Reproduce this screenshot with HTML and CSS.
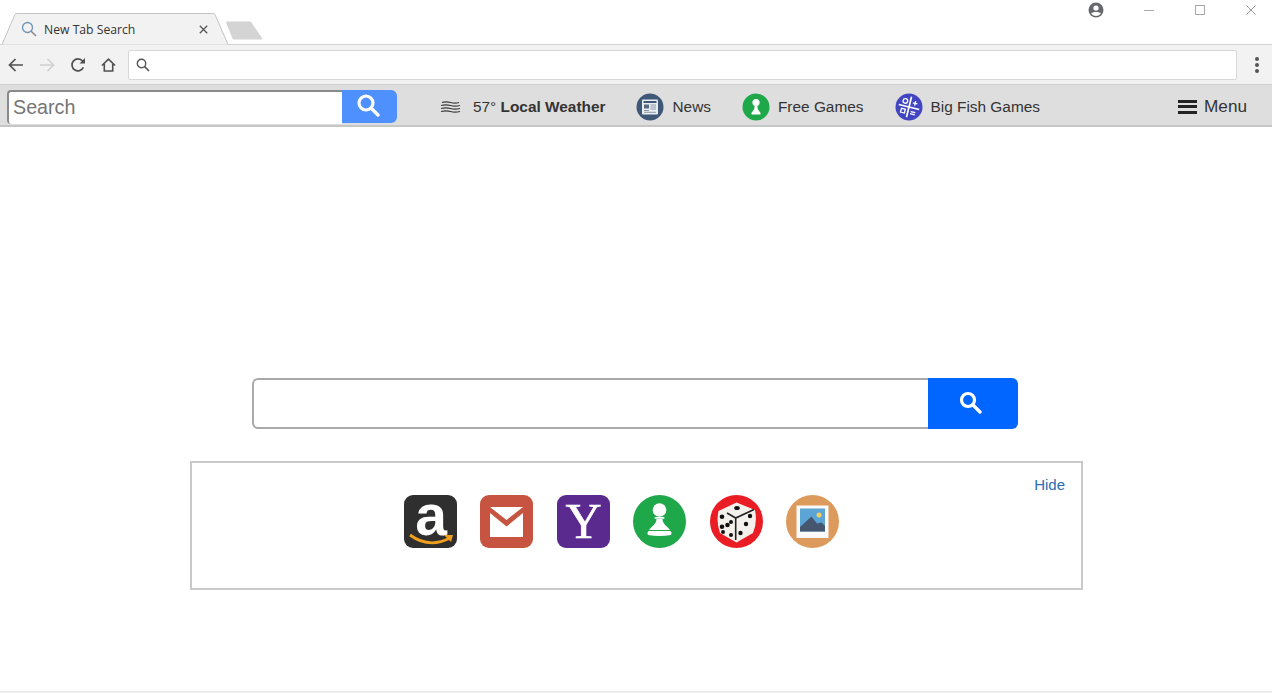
FILE: index.html
```html
<!DOCTYPE html>
<html lang="en">
<head>
    <meta charset="UTF-8">
    <meta name="viewport" content="width=device-width, initial-scale=1.0">
    <title>New Tab Search</title>
    <link rel="stylesheet" href="styles.css">
</head>
<body>

    <!-- browser chrome -->
    <div class="tabstrip">
        <div class="tab">
            <svg class="tab-shape" width="230" height="32" viewBox="0 0 230 32">
                <path d="M0 31.5 L13 1.5 Q13.6 .5 15 .5 L211 .5 Q212.4 .5 213 1.5 L226 31.5" fill="#f2f2f2" stroke="#c4c4c4"/>
            </svg>
            <svg class="tab-icon" width="16" height="16" viewBox="0 0 16 16">
                <circle cx="6.5" cy="6.5" r="5" fill="none" stroke="#6f93b5" stroke-width="1.3"/>
                <path d="M10.2 10.2 L15 15" stroke="#8a8a8a" stroke-width="1.6"/>
            </svg>
            <span class="tab-title">New Tab Search</span>
            <svg class="tab-close" width="9" height="9" viewBox="0 0 9 9">
                <path d="M.8 .8 L8.2 8.2 M8.2 .8 L.8 8.2" stroke="#555" stroke-width="1.3"/>
            </svg>
        </div>
        <svg class="newtab" width="38" height="19" viewBox="0 0 38 19">
            <path d="M1 1.5 Q1 .5 2 .5 L25 .5 Q26 .5 26.5 1.5 L37 17 Q37.5 18.5 36 18.5 L9 18.5 Q8 18.5 7.5 17.5 Z" fill="#d4d4d4"/>
        </svg>
        <div class="window-btns">
            <svg class="win-user" width="16" height="16" viewBox="0 0 16 16">
                <circle cx="8" cy="8" r="7.5" fill="#666a6e"/>
                <circle cx="8" cy="6" r="2.6" fill="#fff"/>
                <path d="M3.2 11.6 C4.4 9.6 11.6 9.6 12.8 11.6 C11.4 13.4 9.6 14 8 14 C6.4 14 4.6 13.4 3.2 11.6 Z" fill="#fff"/>
            </svg>
            <svg class="win-btn" width="10" height="10" viewBox="0 0 10 10"><path d="M0 5.5 H10" stroke="#aaa"/></svg>
            <svg class="win-btn" width="10" height="10" viewBox="0 0 10 10"><rect x=".5" y=".5" width="9" height="9" fill="none" stroke="#aaa"/></svg>
            <svg class="win-btn" width="10" height="10" viewBox="0 0 10 10"><path d="M.5 .5 L9.5 9.5 M9.5 .5 L.5 9.5" stroke="#999"/></svg>
        </div>
    </div>

    <div class="toolbar">
        <div class="tool">
            <svg width="16" height="14" viewBox="0 0 16 14"><path d="M15 7 H2 M7.5 1 L1.5 7 L7.5 13" fill="none" stroke="#505050" stroke-width="1.7"/></svg>
        </div>
        <div class="tool">
            <svg width="16" height="14" viewBox="0 0 16 14"><path d="M1 7 H14 M8.5 1 L14.5 7 L8.5 13" fill="none" stroke="#d0d0d0" stroke-width="1.7"/></svg>
        </div>
        <div class="tool">
            <svg width="16" height="16" viewBox="0 0 16 16"><path d="M13.4 10.4 A6 6 0 1 1 12.6 4" fill="none" stroke="#505050" stroke-width="1.7"/><path d="M15 1 V6.5 H9.5 Z" fill="#505050"/></svg>
        </div>
        <div class="tool">
            <svg width="15" height="14" viewBox="0 0 16 15"><path d="M1 8 L8 1.2 L15 8 M3.5 6.5 V14 H12.5 V6.5" fill="none" stroke="#505050" stroke-width="1.7"/></svg>
        </div>
        <div class="omnibox">
            <svg width="14" height="14" viewBox="0 0 14 14">
                <circle cx="5.5" cy="5.5" r="4.2" fill="none" stroke="#555" stroke-width="1.4"/>
                <path d="M8.6 8.6 L13 13" stroke="#555" stroke-width="1.6"/>
            </svg>
        </div>
        <div class="kebab"><span></span><span></span><span></span></div>
    </div>

    <!-- toolbar of the extension -->
    <header class="bar">
        <form class="bar-search">
            <input type="text" class="bar-input" placeholder="Search">
            <button type="button" class="bar-btn">
                <svg width="24" height="24" viewBox="0 0 24 24">
                    <circle cx="10" cy="10" r="7" fill="none" stroke="#fff" stroke-width="3.2"/>
                    <path d="M15 15 L22 22" stroke="#fff" stroke-width="3.4" stroke-linecap="round"/>
                </svg>
            </button>
        </form>

        <a class="bar-item weather">
            <svg width="19" height="12" viewBox="0 0 19 12" fill="none" stroke="#3a3a3a" stroke-width="1.2">
                <path d="M1 1.500 Q5 .2 9.500 1.500 T18 1.500"/>
                <path d="M0 4.500 Q5 3.200 9.500 4.500 T19 4.500"/>
                <path d="M0 7.500 Q5 6.200 9.500 7.500 T19 7.500"/>
                <path d="M0 10.500 Q5 9.200 9.500 10.500 T19 10.500"/>
            </svg>
            <span>57° <b>Local Weather</b></span>
        </a>
        <a class="bar-item">
            <svg width="28" height="28" viewBox="0 0 28 28">
                <circle cx="14" cy="14" r="13.5" fill="#3f5878"/>
                <rect x="6" y="6.5" width="16" height="15" rx="1" fill="#e8eef0"/>
                <rect x="7.5" y="8" width="13" height="2" fill="#3f5878"/>
                <rect x="8" y="11.5" width="5" height="4" fill="#56697f"/>
                <path d="M14.5 12 H20 M14.5 14 H20 M14.5 16 H20 M8 17.5 H13 M8 19.3 H20" stroke="#8b9aa8"/>
            </svg>
            <span>News</span>
        </a>
        <a class="bar-item">
            <svg width="28" height="28" viewBox="0 0 28 28">
                <circle cx="14" cy="14" r="13.5" fill="#1fa84a"/>
                <circle cx="14" cy="9.5" r="3.6" fill="#fff"/>
                <path d="M12.6 13 H15.4 C15.4 16 16.2 17 18.6 20 Q19 21.5 17.5 21.5 H10.5 Q9 21.5 9.4 20 C11.8 17 12.6 16 12.6 13 Z" fill="#fff"/>
            </svg>
            <span>Free Games</span>
        </a>
        <a class="bar-item">
            <svg width="28" height="28" viewBox="0 0 28 28">
                <circle cx="14" cy="14" r="13.5" fill="#4145c2"/>
                <g transform="rotate(14 14 14)">
                    <path d="M14 3.500 V24.500 M3.500 14 H24.500" stroke="#fff" stroke-width="1.7"/>
                    <circle cx="9" cy="9" r="2.300" fill="none" stroke="#fff" stroke-width="1.3"/>
                    <path d="M16.700 9 H21.500 M19.100 6.600 V11.400 M16.700 18 H21.500 M16.700 20.200 H21.500" stroke="#fff" stroke-width="1.3"/>
                    <rect x="7" y="17" width="4" height="4" fill="none" stroke="#fff" stroke-width="1.3"/>
                </g>
            </svg>
            <span>Big Fish Games</span>
        </a>

        <a class="bar-menu">
            <span class="burger"><i></i><i></i><i></i></span>
            <span>Menu</span>
        </a>
    </header>

    <main class="page">
        <form class="main-search">
            <input type="text" class="main-input">
            <button type="button" class="main-btn">
                <svg width="23" height="23" viewBox="0 0 23 23">
                    <circle cx="9" cy="9" r="6.500" fill="none" stroke="#fff" stroke-width="3.200"/>
                    <path d="M14 14 L21 21" stroke="#fff" stroke-width="3.400" stroke-linecap="round"/>
                </svg>
            </button>
        </form>

        <section class="shortcuts">
            <div class="shortcut-list">
                <!-- amazon -->
                <svg class="shortcut" viewBox="0 0 53 53">
                    <rect width="53" height="53" rx="9" fill="#2f2f2f"/>
                    <text x="27" y="40" class="amazon-a">a</text>
                    <path d="M6 40 Q25 54 46 43" fill="none" stroke="#f0a01e" stroke-width="2.800"/>
                    <path d="M40 40 L49 40 L47 47 Z" fill="#f0a01e"/>
                </svg>
                <!-- mail -->
                <svg class="shortcut" viewBox="0 0 53 53">
                    <rect width="53" height="53" rx="9" fill="#c75440"/>
                    <path d="M10 12 H43 L26.500 25 Z" fill="#fff"/>
                    <path d="M10 18 L26.500 31.500 L43 18 V42 H10 Z" fill="#fff"/>
                </svg>
                <!-- yahoo -->
                <svg class="shortcut" viewBox="0 0 53 53">
                    <rect width="53" height="53" rx="9" fill="#5b2a8f"/>
                    <text x="26.500" y="43" class="yahoo-y">Y</text>
                </svg>
                <!-- games -->
                <svg class="shortcut" viewBox="0 0 53 53">
                    <circle cx="26.500" cy="26.500" r="26.500" fill="#1fa84a"/>
                    <circle cx="26.500" cy="15" r="6.800" fill="#fff"/>
                    <rect x="21.500" y="22" width="10" height="1.800" rx=".9" fill="#fff"/>
                    <path d="M23.500 24 H29.500 C29.500 29 34 31 37 35 H16 C19 31 23.500 29 23.500 24 Z" fill="#fff"/>
                    <path d="M15.500 36 H37.500 Q39.500 38 38 40 Q26.500 42 15 40 Q13.500 38 15.500 36 Z" fill="#fff"/>
                </svg>
                <!-- dice -->
                <svg class="shortcut" viewBox="0 0 53 53">
                    <circle cx="26.500" cy="26.500" r="26.500" fill="#ea1c24"/>
                    <path d="M26.500 7.500 L45 15 Q47.500 28 43 38 L26.500 47.500 L10 38 Q6 27 8.500 16 Z" fill="#f4f1ec"/>
                    <path d="M17 18 L25.700 23 L44 14.500 M25.700 23 V45" fill="none" stroke="#222" stroke-width="1.600"/>
                    <g fill="#111">
                        <ellipse cx="27" cy="13" rx="2.800" ry="2"/>
                        <circle cx="12" cy="21.700" r="2.300"/>
                        <circle cx="12" cy="31.700" r="2.300"/>
                        <circle cx="17.500" cy="30" r="2.300"/>
                        <circle cx="21" cy="27" r="2"/>
                        <circle cx="13" cy="37" r="2"/>
                        <circle cx="21" cy="40" r="2"/>
                        <circle cx="40" cy="21" r="2.200"/>
                        <circle cx="36" cy="29" r="2.200"/>
                        <circle cx="30.500" cy="38" r="2.200"/>
                    </g>
                </svg>
                <!-- wallpaper -->
                <svg class="shortcut" viewBox="0 0 53 53">
                    <circle cx="26.500" cy="26.500" r="26.500" fill="#dc9a5c"/>
                    <rect x="10.500" y="10.500" width="32" height="32.500" fill="#fafafa"/>
                    <rect x="14" y="13.500" width="25" height="23" fill="#5ba4d6"/>
                    <circle cx="33" cy="20" r="2.500" fill="#f3cf63"/>
                    <path d="M14 36.500 V32 L25.500 21.500 L31 28.500 L35.500 27.500 L39 31 V36.500 Z" fill="#47566f"/>
                </svg>
            </div>
            <a class="hide-link">Hide</a>
        </section>
    </main>

</body>
</html>
```

FILE: styles.css
```css
* {
    margin: 0;
    padding: 0;
    box-sizing: border-box;
}

html, body {
    height: 693px;
    overflow: hidden;
}

body {
    font-family: "Liberation Sans", Arial, sans-serif;
    background-color: #fff;
    color: #333;
    display: flex;
    flex-direction: column;
    border-bottom: 2px solid #ececec;
}

svg {
    display: block;
    flex-shrink: 0;
}

/* tabs */
.tabstrip {
    height: 45px;
    display: flex;
    align-items: flex-start;
    border-bottom: 1px solid #d2d2d2;
}

.tab {
    position: relative;
    width: 226px;
    height: 32px;
    margin: 13px 0 0 2px;
    display: flex;
    align-items: center;
    padding: 0 20px 0 19px;
}

.tab-shape {
    position: absolute;
    left: 0;
    top: 0;
}

.tab-icon {
    position: relative;
    margin-right: 7px;
}

.tab-title {
    position: relative;
    font-family: "Open Sans", sans-serif;
    font-size: 12.2px;
    color: #333;
    flex: 1;
}

.tab-close {
    position: relative;
}

.newtab {
    margin: 21px 0 0 -3px;
}

.window-btns {
    margin-left: auto;
    display: flex;
    align-items: center;
    height: 20px;
    padding-right: 16.5px;
}

.win-user {
    margin-right: 40px;
}

.win-btn {
    margin-right: 41px;
}

.win-btn:last-child {
    margin-right: 0;
}

/* address row */
.toolbar {
    height: 40px;
    background-color: #f2f2f2;
    display: flex;
    align-items: center;
    border-bottom: 1px solid #cfcfcf;
}

.tool {
    width: 31px;
    display: flex;
    justify-content: center;
}

.omnibox {
    width: 1109px;
    height: 30px;
    margin-left: 4px;
    flex-shrink: 0;
    background-color: #fff;
    border: 1px solid #d8d8d8;
    border-radius: 2px;
    display: flex;
    align-items: center;
    padding-left: 7px;
}

.kebab {
    margin-left: 18px;
    display: flex;
    flex-direction: column;
    align-items: center;
    gap: 2px;
}

.kebab span {
    width: 4px;
    height: 4px;
    border-radius: 50%;
    background-color: #555;
}

/* extension bar */
.bar {
    height: 42px;
    background-color: #dedede;
    border-bottom: 2px solid #c6c6c6;
    display: flex;
    align-items: center;
    padding: 3px 25px 0 7px;
    font-size: 15.4px;
}

.bar-search {
    display: flex;
    align-items: flex-start;
    width: 390px;
    margin-right: 44px;
}

.bar-input {
    width: 335px;
    height: 34px;
    border: none;
    border-top: 2px solid #8a8a8a;
    border-left: 2px solid #8a8a8a;
    border-radius: 4px 0 0 4px;
    padding: 0 4px;
    font-family: "Liberation Sans", Arial, sans-serif;
    font-size: 19.7px;
    background-color: #fff;
    outline: none;
}

.bar-input::placeholder {
    color: #757575;
}

.bar-btn {
    width: 55px;
    height: 33px;
    border: none;
    border-radius: 0 6px 6px 0;
    background-color: #4d90fe;
    display: flex;
    align-items: center;
    justify-content: center;
}

.bar-btn svg {
    margin: 0 3px 2px 0;
}

.bar-item {
    display: flex;
    align-items: center;
    gap: 8px;
    margin-right: 31px;
    color: #333;
}

.weather {
    gap: 13px;
}

.bar-menu {
    margin-left: auto;
    display: flex;
    align-items: center;
    gap: 7px;
    font-size: 17.2px;
    color: #333;
}

.burger {
    display: flex;
    flex-direction: column;
    gap: 2.5px;
}

.burger i {
    display: block;
    width: 19px;
    height: 3px;
    background-color: #222;
}

/* page */
.page {
    flex: 1;
    padding: 251px 0 0 190px;
}

.main-search {
    display: flex;
    width: 766px;
    height: 51px;
    margin-left: 62px;
}

.main-input {
    flex: 1;
    border: 2px solid #a9a9a9;
    border-right: none;
    border-radius: 6px 0 0 6px;
    outline: none;
}

.main-btn {
    width: 90px;
    border: none;
    border-radius: 0 6px 6px 0;
    background-color: #0066ff;
    display: flex;
    align-items: center;
    justify-content: center;
}

.main-btn svg {
    margin: 0 6px 2px 0;
}

.shortcuts {
    width: 893px;
    height: 129px;
    margin-top: 32px;
    border: 2px solid #c9c9c9;
    display: flex;
    justify-content: space-between;
    padding: 32px 16px 0 212px;
}

.shortcut-list {
    display: flex;
    gap: 23.4px;
}

.shortcut {
    width: 53px;
    height: 53px;
    overflow: visible;
}

.amazon-a {
    font-family: "Liberation Sans", Arial, sans-serif;
    font-size: 57px;
    font-weight: bold;
    fill: #fff;
    text-anchor: middle;
}

.yahoo-y {
    font-family: "Liberation Serif", serif;
    font-size: 50px;
    fill: #fff;
    stroke: #fff;
    stroke-width: .6px;
    text-anchor: middle;
}

.hide-link {
    font-size: 15px;
    color: #2a6db5;
    margin-top: -19px;
}
```
